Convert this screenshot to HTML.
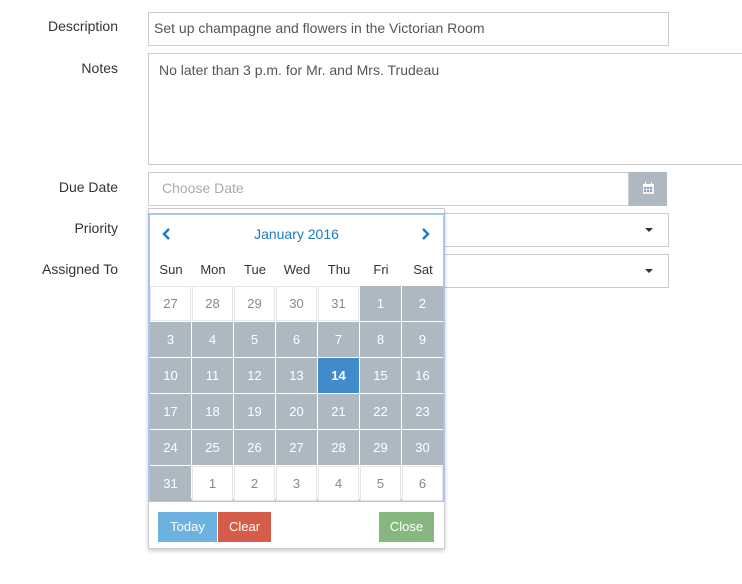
<!DOCTYPE html>
<html><head><style>
*{box-sizing:border-box;margin:0;padding:0}
body{width:742px;height:584px;background:#fff;font-family:"Liberation Sans",sans-serif;font-size:14px;color:#333;position:relative;overflow:hidden}
.a{position:absolute}
.lbl{position:absolute;right:624px;text-align:right;font-size:14px;color:#333}
.in{position:absolute;border:1px solid #ccc;background:#fff;color:#555;font-size:14px;padding-left:5px;line-height:31px}
.caret{position:absolute;width:0;height:0;border-left:4px solid transparent;border-right:4px solid transparent;border-top:4px solid #333}
.c{position:absolute;width:41px;height:35px;line-height:35px;text-align:center;font-size:13px}
.g{background:#adb8c0;color:#fff}
.w{background:#fff;color:#888;border:1px solid #e6e6e6;line-height:33px}
.s{background:#428bca;color:#fff;font-weight:bold}
.dn{position:absolute;top:262px;width:42px;text-align:center;font-size:13px;color:#333}
.btn{position:absolute;top:512px;height:30px;line-height:30px;color:#fff;text-align:center;font-size:13px}
</style></head><body>
<div class="lbl" style="top:18px">Description</div>
<div class="in" style="left:148px;top:12px;width:521px;height:34px">Set up champagne and flowers in the Victorian Room</div>
<div class="lbl" style="top:60px">Notes</div>
<div class="in" style="left:148px;top:53px;width:600px;height:112px;line-height:20px;padding:6px 10px">No later than 3 p.m. for Mr. and Mrs. Trudeau</div>
<div class="lbl" style="top:179px">Due Date</div>
<div class="in" style="left:148px;top:172px;width:481px;height:34px;color:#aaa;padding-left:13px">Choose Date</div>
<div class="a" style="left:629px;top:172px;width:38px;height:34px;background:#adb8c0">
<svg width="38" height="34"><rect x="14" y="12" width="11" height="10" fill="#f4f0e6"/><rect x="14" y="12" width="11" height="2" fill="#fff"/><g fill="#8a9bc0"><rect x="15" y="15" width="2" height="2"/><rect x="18" y="15" width="2" height="2"/><rect x="21" y="15" width="2" height="2"/><rect x="15" y="18" width="2" height="2"/><rect x="18" y="18" width="2" height="2"/><rect x="21" y="18" width="2" height="2"/></g><rect x="16" y="10" width="1" height="3" fill="#fff"/><rect x="22" y="10" width="1" height="3" fill="#fff"/></svg></div>
<div class="lbl" style="top:220px">Priority</div>
<div class="in" style="left:148px;top:213px;width:521px;height:34px"></div>
<div class="caret" style="left:645px;top:228px"></div>
<div class="lbl" style="top:261px">Assigned To</div>
<div class="in" style="left:148px;top:254px;width:521px;height:34px"></div>
<div class="caret" style="left:645px;top:269px"></div>

<div class="a" style="left:148px;top:208px;width:297px;height:341px;background:#fff;border:1px solid #ccc;box-shadow:0 2px 4px rgba(0,0,0,.2)"></div>
<div class="a" style="left:148px;top:213px;width:297px;height:289px;border:2px solid #a8c4f0;border-bottom-width:3px;background:#fff"></div>
<svg class="a" style="left:160px;top:226px" width="14" height="16"><path d="M9 3 L4 8 L9 13" stroke="#1a7bc7" stroke-width="2.5" fill="none"/></svg>
<svg class="a" style="left:419px;top:226px" width="14" height="16"><path d="M4 3 L9 8 L4 13" stroke="#1a7bc7" stroke-width="2.5" fill="none"/></svg>
<div class="a" style="left:150px;top:226px;width:293px;text-align:center;color:#1a7bc7;font-size:14px">January 2016</div>
<div class="dn" style="left:150px">Sun</div><div class="dn" style="left:192px">Mon</div><div class="dn" style="left:234px">Tue</div><div class="dn" style="left:276px">Wed</div><div class="dn" style="left:318px">Thu</div><div class="dn" style="left:360px">Fri</div><div class="dn" style="left:402px">Sat</div>
<div id="cal"></div>
<div class="btn" style="left:158px;width:59px;background:#6cb2e0">Today</div>
<div class="btn" style="left:218px;width:53px;background:#d45c48">Clear</div>
<div class="btn" style="left:379px;width:55px;background:#86b77f">Close</div>
<script>
var d=[27,28,29,30,31];for(var i=1;i<=31;i++)d.push(i);for(i=1;i<=6;i++)d.push(i);
var h='';for(var k=0;k<42;k++){var r=Math.floor(k/7),c=k%7;var cls=(k<5||k>35)?'w':(d[k]==14?'s':'g');
h+='<div class="c '+cls+'" style="left:'+(150+c*42)+'px;top:'+(286+r*36)+'px">'+d[k]+'</div>';}
document.getElementById('cal').innerHTML=h;
</script>
</body></html>
